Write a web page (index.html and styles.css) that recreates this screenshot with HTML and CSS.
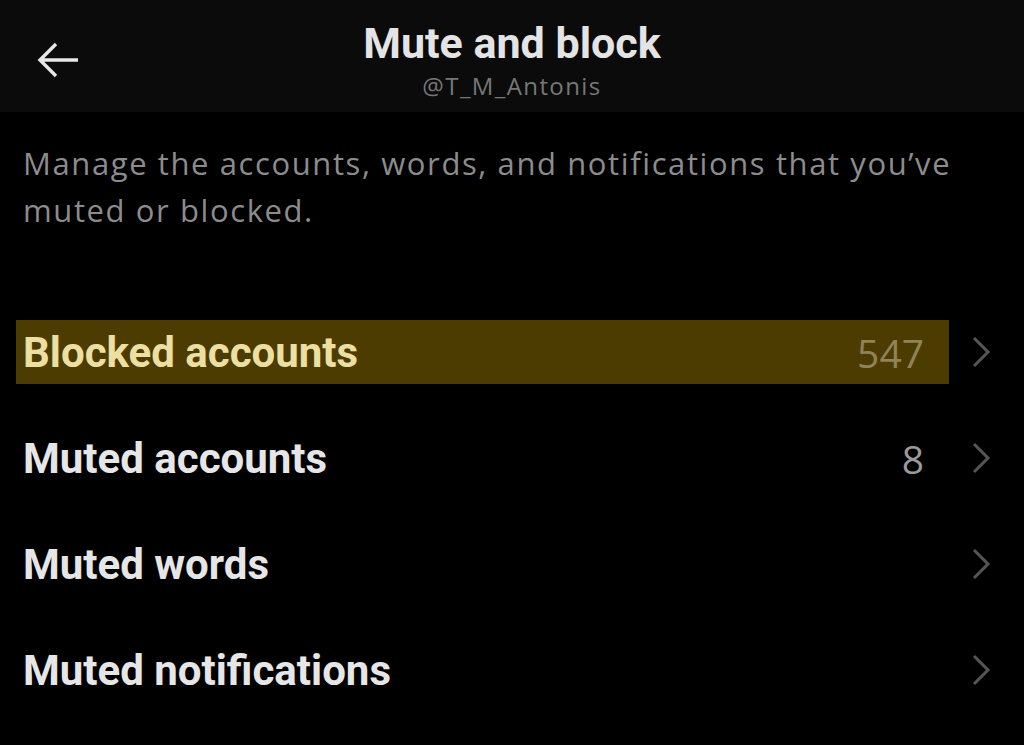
FILE: index.html
```html
<!DOCTYPE html>
<html lang="en">
<head>
<meta charset="utf-8">
<title>Mute and block</title>
<link rel="stylesheet" href="styles.css">
</head>
<body>
<header class="topbar">
  <button class="back" aria-label="Back">
    <svg width="44" height="38" viewBox="0 0 44 38"><path d="M42 19H5M20 3L4 19L20 35" fill="none" stroke="#e8e8e8" stroke-width="3.4" stroke-linecap="butt" stroke-linejoin="miter"/></svg>
  </button>
  <div class="titles">
    <h1 class="title">Mute and block</h1>
    <div class="handle">@T_M_Antonis</div>
  </div>
</header>
<p class="desc">Manage the accounts, words, and notifications that you’ve muted or blocked.</p>
<ul class="list">
  <li class="row">
    <div class="item highlight"><span class="label">Blocked accounts</span><span class="count">547</span></div>
    <svg class="chev" width="20" height="32" viewBox="0 0 20 32"><path d="M3 2L17 16L3 30" fill="none" stroke="#555" stroke-width="3"/></svg>
  </li>
  <li class="row">
    <div class="item"><span class="label">Muted accounts</span><span class="count">8</span></div>
    <svg class="chev" width="20" height="32" viewBox="0 0 20 32"><path d="M3 2L17 16L3 30" fill="none" stroke="#555" stroke-width="3"/></svg>
  </li>
  <li class="row">
    <div class="item"><span class="label">Muted words</span></div>
    <svg class="chev" width="20" height="32" viewBox="0 0 20 32"><path d="M3 2L17 16L3 30" fill="none" stroke="#555" stroke-width="3"/></svg>
  </li>
  <li class="row">
    <div class="item"><span class="label">Muted notifications</span></div>
    <svg class="chev" width="20" height="32" viewBox="0 0 20 32"><path d="M3 2L17 16L3 30" fill="none" stroke="#555" stroke-width="3"/></svg>
  </li>
</ul>
</body>
</html>
```
FILE: styles.css
```css
html, body {
  margin: 0;
  padding: 0;
  background: #000;
  width: 1024px;
  height: 745px;
  overflow: hidden;
}
body {
  font-family: Roboto, "Liberation Sans", sans-serif;
  color: #e6e6e6;
}
.topbar {
  height: 112px;
  box-sizing: border-box;
  padding-top: 18px;
  background: #0b0b0b;
  display: flex;
  align-items: flex-start;
  justify-content: center;
  position: relative;
}
.back {
  position: absolute;
  left: 36px;
  top: 41px;
  background: none;
  border: 0;
  padding: 0;
  display: flex;
}
.titles {
  text-align: center;
}
.title {
  margin: 0;
  font-size: 43px;
  font-weight: 700;
  line-height: 50px;
  color: #e4e4e4;
}
.handle {
  font-family: "Open Sans", sans-serif;
  font-size: 24px;
  letter-spacing: 1.4px;
  line-height: 36px;
  color: #777;
}
.desc {
  margin: 28px 30px 0 23px;
  font-family: "Open Sans", sans-serif;
  font-size: 31px;
  letter-spacing: 1.6px;
  line-height: 47px;
  color: #8c8c8c;
}
.list {
  list-style: none;
  margin: 65px 0 0 0;
  padding: 0;
}
.row {
  height: 106px;
  display: flex;
  align-items: center;
}
.item {
  margin-left: 16px;
  width: 933px;
  height: 64px;
  box-sizing: border-box;
  padding: 0 25px 0 7px;
  display: flex;
  align-items: center;
  justify-content: space-between;
}
.label {
  font-size: 42px;
  font-weight: 700;
  color: #e6e6e6;
}
.count {
  font-family: "Open Sans", sans-serif;
  font-size: 39px;
  color: #9a9a9a;
}
.highlight {
  background: #4d3c02;
}
.highlight .label {
  color: #ecdfa2;
}
.highlight .count {
  color: #8f8357;
}
.chev {
  margin-left: 22px;
}
```
